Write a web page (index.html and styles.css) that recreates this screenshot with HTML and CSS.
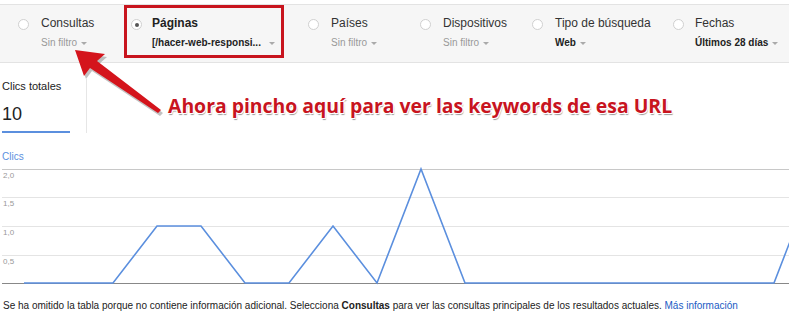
FILE: index.html
```html
<!DOCTYPE html>
<html lang="es">
<head>
<meta charset="utf-8">
<title>Search Console</title>
<link rel="stylesheet" href="styles.css">
</head>
<body>
<div class="bar">
  <div class="item w1">
    <span class="radio"></span>
    <div class="txt">
      <div class="lbl">Consultas</div>
      <div class="sub">Sin filtro<span class="caret"></span></div>
    </div>
  </div>
  <div class="item boxed">
    <span class="radio on"></span>
    <div class="txt g10">
      <div class="lbl b">Páginas</div>
      <div class="sub dark spread">[/hacer-web-responsi...<span class="caret"></span></div>
    </div>
  </div>
  <div class="item w3">
    <span class="radio"></span>
    <div class="txt">
      <div class="lbl">Países</div>
      <div class="sub">Sin filtro<span class="caret"></span></div>
    </div>
  </div>
  <div class="item w4">
    <span class="radio"></span>
    <div class="txt">
      <div class="lbl">Dispositivos</div>
      <div class="sub">Sin filtro<span class="caret"></span></div>
    </div>
  </div>
  <div class="item w5">
    <span class="radio"></span>
    <div class="txt">
      <div class="lbl">Tipo de búsqueda</div>
      <div class="sub dark">Web<span class="caret"></span></div>
    </div>
  </div>
  <div class="item w6">
    <span class="radio"></span>
    <div class="txt g11">
      <div class="lbl">Fechas</div>
      <div class="sub dark">Últimos 28 días<span class="caret"></span></div>
    </div>
  </div>
</div>

<div class="stats">
  <div class="stat">
    <div class="stat-inner">
      <div class="stat-lbl">Clics totales</div>
      <div class="stat-val">10</div>
    </div>
  </div>
</div>

<div class="chart">
  <div class="chart-lbl">Clics</div>
  <svg class="plot" width="789" height="123" viewBox="0 0 789 123">
    <g class="grid">
      <line x1="2" y1="6.5" x2="789" y2="6.5" class="g-top"/>
      <line x1="2" y1="34.5" x2="789" y2="34.5"/>
      <line x1="2" y1="63.5" x2="789" y2="63.5"/>
      <line x1="2" y1="92.5" x2="789" y2="92.5"/>
      <line x1="2" y1="120.5" x2="789" y2="120.5" class="g-axis"/>
    </g>
    <g class="ylab">
      <text x="3" y="15">2,0</text>
      <text x="3" y="43">1,5</text>
      <text x="3" y="72">1,0</text>
      <text x="3" y="101">0,5</text>
    </g>
    <polyline class="series" points="24,120 68,120 113,120 157,63 201,63 245,120 289,120 333,63 377,120 421,6 465,120 509,120 553,120 598,120 642,120 686,120 730,120 774,120 818,6"/>
  </svg>
</div>

<p class="note">Se ha omitido la tabla porque no contiene información adicional. Selecciona <b>Consultas</b> para ver las consultas principales de los resultados actuales. <a href="#">Más información</a></p>

<svg class="arrow" width="200" height="130" viewBox="0 0 200 130">
  <polygon class="arrow-shadow" points="77,53 107,57 99,64 163,113 160,116 92,71 86,79"/>
  <polygon class="arrow-body" points="75,50 105,54 97,61 161,110 158,113 90,68 84,76"/>
</svg>
<div class="callout">Ahora pincho aquí para ver las keywords de esa URL</div>
</body>
</html>
```

FILE: styles.css
```css
html, body {
  margin: 0;
  padding: 0;
  background: #fff;
}
body {
  position: relative;
  width: 789px;
  height: 313px;
  overflow: hidden;
  font-family: "Liberation Sans", Arial, sans-serif;
  color: #222;
}
.bar {
  margin-top: 4px;
  height: 57px;
  border-top: 1px solid #e3e3e3;
  border-bottom: 1px solid #e3e3e3;
  background: #f6f6f6;
  display: flex;
  padding-left: 18px;
  box-sizing: content-box;
}
.item {
  display: flex;
  align-items: flex-start;
  padding-top: 10px;
  box-sizing: border-box;
  white-space: nowrap;
}
.w1 { width: 106px; }
.boxed {
  width: 160px;
  height: 53px;
  border: 3px solid #c8141e;
  padding-top: 7px;
  padding-left: 4px;
}
.w3 { width: 112px; margin-left: 24px; }
.w4 { width: 112px; }
.w5 { width: 141px; }
.w6 { width: 110px; }
.radio {
  flex: none;
  width: 11px;
  height: 11px;
  box-sizing: border-box;
  border: 1px solid #d0d0d0;
  border-radius: 50%;
  background: #fff;
  margin-top: 4px;
  position: relative;
}
.radio.on::after {
  content: "";
  position: absolute;
  left: 2.5px;
  top: 2.5px;
  width: 4px;
  height: 4px;
  border-radius: 50%;
  background: #555;
}
.txt {
  margin-left: 12px;
  flex: 1;
}
.txt.g10 { margin-left: 10px; }
.txt.g11 { margin-left: 11px; }
.lbl {
  font-size: 12px;
  line-height: 16px;
  color: #333;
}
.lbl.b {
  font-weight: bold;
  color: #222;
}
.sub {
  margin-top: 5px;
  font-size: 10px;
  line-height: 14px;
  color: #999;
  display: flex;
  align-items: center;
}
.sub.dark {
  color: #222;
  font-weight: bold;
}
.sub.spread {
  justify-content: space-between;
  padding-right: 6px;
}
.caret {
  display: inline-block;
  width: 0;
  height: 0;
  margin-left: 4px;
  border-left: 3px solid transparent;
  border-right: 3px solid transparent;
  border-top: 3px solid #aaa;
}
.stats {
  margin-top: 16px;
  display: flex;
  padding-left: 2px;
}
.stat {
  width: 84px;
  height: 54px;
  border-right: 1px solid #e6e6e6;
}
.stat-inner {
  width: 68px;
  height: 52px;
  border-bottom: 2px solid #5b8fde;
}
.stat-lbl {
  font-size: 11px;
  line-height: 14px;
  color: #222;
}
.stat-val {
  margin-top: 10px;
  font-size: 18px;
  line-height: 22px;
  color: #222;
}
.chart {
  margin-top: 18px;
}
.chart-lbl {
  padding-left: 2px;
  font-size: 10px;
  line-height: 12px;
  color: #5b8fde;
}
.plot {
  display: block;
}
.grid line {
  stroke: #e4e4e4;
  stroke-width: 1;
}
.grid .g-top {
  stroke: #c8c8c8;
}
.grid .g-axis {
  stroke: #888;
}
.ylab text {
  font-family: "Liberation Sans", Arial, sans-serif;
  font-size: 8px;
  fill: #999;
}
.series {
  fill: none;
  stroke: #5b8fde;
  stroke-width: 1.6;
  stroke-linejoin: miter;
}
.note {
  margin: 13px 0 0 3px;
  font-size: 10px;
  line-height: 14px;
  color: #222;
  white-space: nowrap;
}
.note b {
  font-weight: bold;
}
.note a {
  color: #1a5bc4;
  text-decoration: none;
}
.arrow {
  position: absolute;
  left: 0;
  top: 0;
}
.arrow-shadow {
  fill: rgba(80, 80, 80, 0.35);
}
.arrow-body {
  fill: #d4141c;
}
.callout {
  position: absolute;
  left: 168px;
  top: 92px;
  font-family: "Open Sans", "Noto Sans", sans-serif;
  font-weight: bold;
  font-size: 19.4px;
  line-height: 28px;
  color: #c8141e;
  white-space: nowrap;
  text-shadow: -1px -1px 0 #fff, 1px -1px 0 #fff, -1px 1px 0 #fff, 1px 1px 0 #fff, 1px 2px 1px #999;
}
```
